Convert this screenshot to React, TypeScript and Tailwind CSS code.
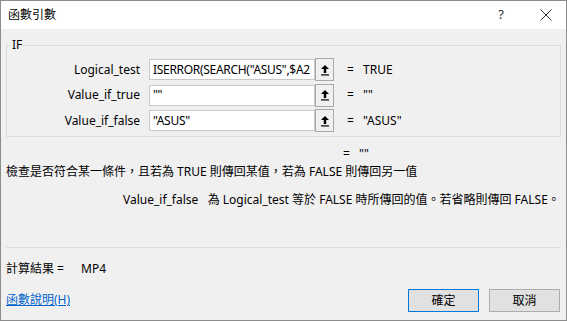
import * as React from 'react';

type ArgRow = {
	label: string;
	value: string;
	result: string;
};

const rows: ArgRow[] = [
	{ label: 'Logical_test', value: 'ISERROR(SEARCH("ASUS",$A2', result: 'TRUE' },
	{ label: 'Value_if_true', value: '""', result: '""' },
	{ label: 'Value_if_false', value: '"ASUS"', result: '"ASUS"' },
];

function CollapseIcon() {
	return (
		<svg width="10" height="12" viewBox="0 0 10 12" fill="none">
			<path d="M5 1 L9 5 L6.2 5 L6.2 9 L3.8 9 L3.8 5 L1 5 Z" fill="#000" />
			<rect x="1" y="10.3" width="8" height="1.2" fill="#000" />
		</svg>
	);
}

function ArgumentRow({ label, value, result }: ArgRow) {
	return (
		<div className="flex h-[21px] items-center">
			<span className="w-[134px] pr-[1px] text-right">{label}</span>
			<div className="ml-[8px] flex h-[21px] w-[166px] items-center overflow-hidden whitespace-nowrap border border-[#c8c8c8] bg-white pl-[3px] tracking-[-0.3px]">
				{value}
			</div>
			<button
				type="button"
				className="flex h-[23px] w-[19px] items-center justify-center border border-[#a8a8a8] bg-[#f0f0f0]"
			>
				<CollapseIcon />
			</button>
			<span className="ml-[13px] w-[16px]">=</span>
			<span>{result}</span>
		</div>
	);
}

export default function App() {
	return (
		<div
			className="flex h-[321px] w-[567px] flex-col border border-[#8c8c8c] text-[12px] text-black"
			style={{ fontFamily: '"Noto Sans", "Noto Sans CJK TC", sans-serif' }}
		>
			<div className="flex h-[28px] shrink-0 items-center bg-white pl-[7px]">
				<span className="text-[12px]">函數引數</span>
				<span className="ml-auto mr-[36px] text-[13px] text-[#333]">?</span>
				<svg className="mr-[14px]" width="12" height="12" viewBox="0 0 12 12">
					<path d="M0.5 0.5 L11.5 11.5 M11.5 0.5 L0.5 11.5" stroke="#333" strokeWidth="1" />
				</svg>
			</div>

			<div className="flex flex-1 flex-col bg-[#f0f0f0] px-[5px]">
				<fieldset className="mt-[8px] h-[100px] border border-[#dcdcdc] pl-0 pt-[6px]">
					<legend className="ml-[4px] px-[1px] leading-[16px]">IF</legend>
					<div className="flex flex-col gap-[4.5px]">
						{rows.map((row) => (
							<ArgumentRow key={row.label} {...row} />
						))}
					</div>
				</fieldset>

				<div className="mt-[9px] flex h-[16px] items-center pl-[337px]">
					<span className="w-[16px]">=</span>
					<span>""</span>
				</div>
				<p className="mt-[1px] leading-[18px]">
					檢查是否符合某一條件，且若為 TRUE 則傳回某值，若為 FALSE 則傳回另一值
				</p>
				<p className="mt-[10px] pl-[117px] leading-[18px]">
					Value_if_false&nbsp;&nbsp; 為 Logical_test 等於 FALSE 時所傳回的值。若省略則傳回 FALSE。
				</p>

				<div className="mt-[38px] h-px bg-[#dcdcdc]" />

				<div className="mt-[12px] flex h-[18px] items-center">
					<span>計算結果 =</span>
					<span className="ml-[17px]">MP4</span>
				</div>

				<div className="mt-[2px] flex items-start">
					<a className="mt-[11px] leading-[18px] text-[#0066cc] underline" href="#">
						函數說明(H)
					</a>
					<div className="ml-auto mr-[1px] mt-[9px] flex gap-[10px]">
						<button
							type="button"
							className="h-[23px] w-[71px] border border-[#0078d7] bg-[#e1e1e1]"
						>
							確定
						</button>
						<button
							type="button"
							className="h-[23px] w-[71px] border border-[#adadad] bg-[#e1e1e1]"
						>
							取消
						</button>
					</div>
				</div>
			</div>
		</div>
	);
}
